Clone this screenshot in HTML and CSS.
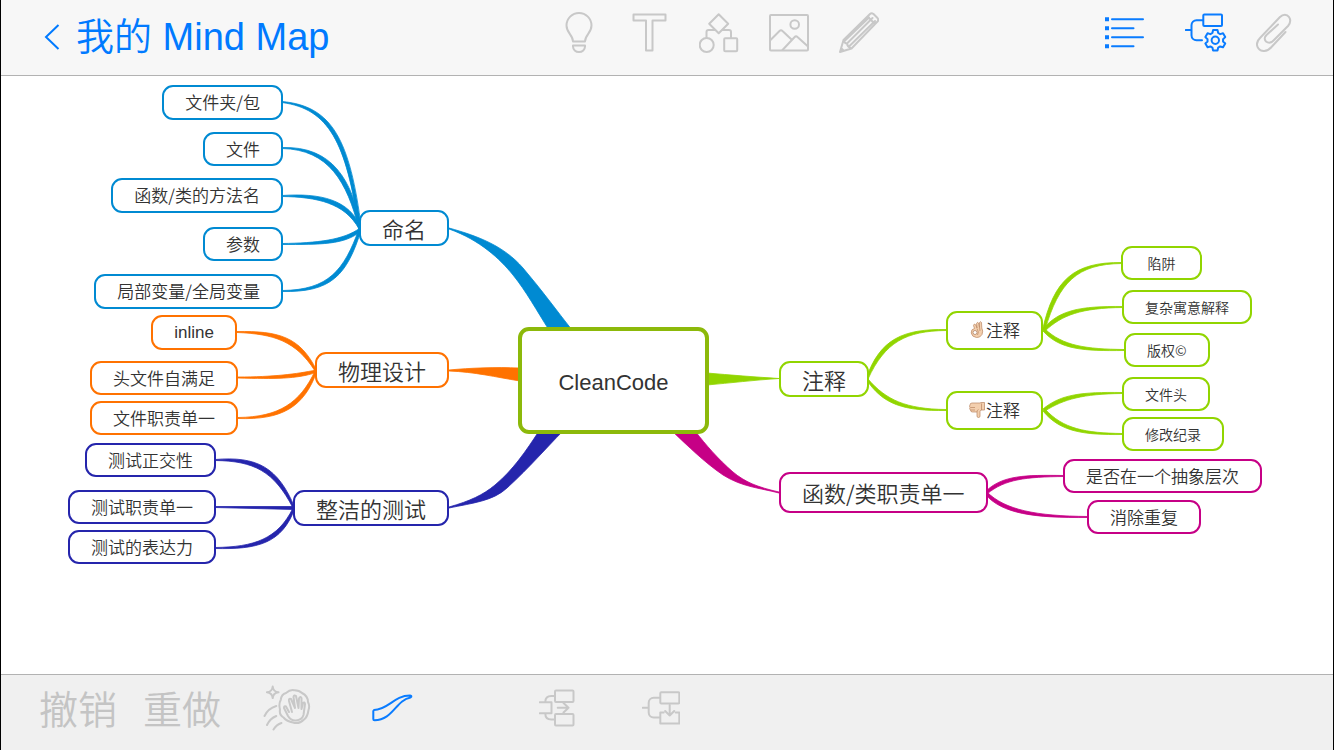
FILE: index.html
```html
<!DOCTYPE html>
<html lang="zh-CN">
<head>
<meta charset="utf-8">
<meta name="viewport" content="width=device-width, initial-scale=1">
<title>我的 Mind Map</title>
<link rel="stylesheet" href="styles.css">
</head>
<body>
<header class="topbar">
  <button class="back" type="button">
    <svg class="back-arrow" width="16" height="28" viewBox="0 0 16 28" aria-hidden="true"><path d="M14.500 2L2 14L14.500 26"/></svg>
    <span>我的 Mind Map</span>
  </button>
  <div class="tools">
    <button class="icon" type="button" aria-label="灵感">
      <svg width="40" height="44" viewBox="0 0 40 44"><path d="M14 30.500C14 24 7.500 22 7.500 14.500a12.500 12.500 0 0 1 25 0C32.500 22 26 24 26 30.500zM14 34.500h12v1a6 5.500 0 0 1-12 0z"/></svg>
    </button>
    <button class="icon" type="button" aria-label="文本">
      <svg width="40" height="44" viewBox="0 0 40 44"><path d="M4.500 3.500h32v6h-13v30h-6.500v-30h-12.500z"/></svg>
    </button>
    <button class="icon" type="button" aria-label="形状">
      <svg width="40" height="44" viewBox="0 0 40 44"><path d="M19.700 3.200l9.500 9.500l-9.500 9.500l-9.500-9.500zM15.500 19h-6a2 2 0 0 0-2 2v6M24 19h6a2 2 0 0 1 2 2v6"/><circle cx="7.700" cy="34" r="7"/><rect x="25.200" y="27.200" width="13" height="13" rx="1"/></svg>
    </button>
    <button class="icon" type="button" aria-label="图片">
      <svg width="40" height="44" viewBox="0 0 40 44"><rect x="1" y="4" width="38" height="35.500" rx="1"/><circle cx="25.700" cy="13.500" r="4.300"/><path d="M1 29.500L10.500 20q1.500-1.500 3 0l9 8.500M13.500 39L25.700 26q1.300-1.500 2.800 0L39 35.500"/></svg>
    </button>
    <button class="icon" type="button" aria-label="画笔">
      <svg width="40" height="44" viewBox="0 0 40 44"><path d="M1 41L4.500 29L31 3q1.500-1.500 3.500 0L38.500 7q1.500 2 0 3.500L12.500 37.500zM4.500 29q1 3.500 3.500 3.500q.5 3.500 4.500 5M8 32.500L33.500 7M6 29.500L30 6.500M10.500 35L36 10M28.500 5.500L36 13M2.500 37.500L4.500 39.500"/></svg>
    </button>
  </div>
  <div class="actions">
    <button class="icon active" type="button" aria-label="大纲">
      <svg width="40" height="44" viewBox="0 0 40 44"><path class="solid" d="M1 6.200h4v4h-4zM1 15.200h4v4h-4zM1 24.200h4v4h-4zM1 33.200h4v4h-4z"/><path d="M8 8.200h31M8 17.200h21.500M8 26.200h31M8 35.200h21.500"/></svg>
    </button>
    <button class="icon active" type="button" aria-label="导图设置">
      <svg width="44" height="44" viewBox="0 0 44 44"><path d="M.7 19H6.500M18 9.200H11.500a5 5 0 0 0-5 5v10a5 5 0 0 0 5 5H17"/><rect x="18.300" y="3.500" width="18.700" height="11.500" rx="1"/><g transform="translate(30.300 29.300)"><path d="M-2.900-7.300L-2.200-10.200H2.200L2.900-7.300L4.870-6.160L7.730-7L9.930-3.190L7.770-1.140V1.140L9.930 3.190L7.730 7L4.870 6.160L2.900 7.300L2.200 10.200H-2.200L-2.900 7.300L-4.870 6.160L-7.730 7L-9.930 3.190L-7.770 1.140V-1.140L-9.930-3.190L-7.730-7L-4.870-6.160z"/><circle r="3.700"/></g></svg>
    </button>
    <button class="icon" type="button" aria-label="附件">
      <svg width="36" height="44" viewBox="0 0 36 44"><path d="M29.500 21L15 36.500C11 41 5 41 2.500 37.500C0 34 1 30 4 27L24 6C27 3 31 3 33 6C35 9 34.500 12 32 15L17.500 29.500C15 32 12 32 10 30.500C8 28.500 8.500 26 10.500 24L22 13.500"/></svg>
    </button>
  </div>
</header>

<main class="canvas">
  <div class="map">
    <svg class="links" width="1332" height="598" viewBox="1 76 1332 598" aria-hidden="true">
      <g class="blue">
        <path d="M449 228C478 236 504 246 523 268C541 289 557 311 572 330H549C537 311 526 291 513 275C500 259 480 240 449 229z"/>
        <path d="M282 101.500C332 106 350 139 361.500 229H359C346 142 329 109 282 102.500z"/>
        <path d="M282 147.500C332 146 352 179 361.500 229H359C347 182 329 149.500 282 148.500z"/>
        <path d="M282 195.500C320 193 350 199 361.500 229H359C345 203 317 197 282 196.500z"/>
        <path d="M282 243.500C317 243 344 240 360 228L361 231C345 245 320 244.500 282 244.500z"/>
        <path d="M282 290.500C329 290 344 270 359 229H361.500C347 276 331 292.500 282 291.500z"/>
      </g>
      <g class="orange">
        <path d="M449 370C470 368 495 367 520 368V381C495 377 475 372 449 371z"/>
        <path d="M237 331.500C278 331 300 336 317 371H315C296 341 274 334 237 332.500z"/>
        <path d="M238 377C273 377 297 374 316 370V372.500C297 379 275 379 238 378z"/>
        <path d="M238 417.500C279 417 300 403 315 371H317C304 408 281 420 238 418.500z"/>
      </g>
      <g class="indigo">
        <path d="M449 507C470 501 483 495 495 485C513 470 526 451 539 431H563C546 448 530 467 507 488C493 501 473 503 449 508z"/>
        <path d="M215 459.500C257 456 278 467 295 508H293C274 471 254 461 215 460.500z"/>
        <path d="M215 506.500L294 506.500V509.500L215 507.500z"/>
        <path d="M215 547.500C254 547 278 539 293 508H295C282 544 257 549.500 215 548.500z"/>
      </g>
      <g class="green">
        <path d="M707 373C730 375 755 377 779 378.500C755 380 730 383 707 385z"/>
        <path d="M866 379C880 338 904 329 946 329.500V330.500C906 331 885 342 868 379z"/>
        <path d="M868 379C886 400 906 409 946 409.500V410.500C904 411 883 405 866 379z"/>
        <path d="M1042.500 330C1054 279 1074 262 1122 262.500V263.500C1077 264 1059 282 1045 330z"/>
        <path d="M1043 329C1059 310 1080 306 1123 306.500V307.500C1081 308 1062 315 1045 331z"/>
        <path d="M1045 329C1063 346 1086 349 1124 349.500V350.500C1084 351 1060 350 1043 331z"/>
        <path d="M1043 409C1061 394 1082 392 1122 392.500V393.500C1083 394 1064 399 1045 411z"/>
        <path d="M1045 409C1063 429 1086 433 1122 433.500V434.500C1084 435 1060 432 1043 411z"/>
      </g>
      <g class="magenta">
        <path d="M672 431C688 446 704 462 723 475C742 487 760 488 779 493V492C757 487 745 482 733 472C718 459 706 445 695 431z"/>
        <path d="M985 492C1002 475 1025 475 1064 475.500V476.500C1026 477 1005 479 987 494z"/>
        <path d="M987 492C1005 510 1036 516 1088 516.500V517.500C1034 518 1002 514 985 494z"/>
      </g>
    </svg>

    <h1 class="node root">CleanCode</h1>

    <div class="node main blue n-naming">命名</div>
    <div class="node sub tall blue n-folder">文件夹/包</div>
    <div class="node sub blue n-file">文件</div>
    <div class="node sub tall blue n-method">函数/类的方法名</div>
    <div class="node sub blue n-param">参数</div>
    <div class="node sub tall blue n-var">局部变量/全局变量</div>

    <div class="node main orange n-physical">物理设计</div>
    <div class="node sub tall latin orange n-inline">inline</div>
    <div class="node sub orange n-header">头文件自满足</div>
    <div class="node sub orange n-single">文件职责单一</div>

    <div class="node main indigo n-test">整洁的测试</div>
    <div class="node sub indigo n-ortho">测试正交性</div>
    <div class="node sub indigo n-duty">测试职责单一</div>
    <div class="node sub indigo n-express">测试的表达力</div>

    <div class="node main green n-comment">注释</div>
    <div class="node sub mid green n-good">
      <svg class="emoji" width="17" height="18" viewBox="0 0 17 18" role="img" aria-label="好"><path class="skin" d="M5.500 7.500Q3.500 3.500 5.500 3Q7 3 8 7L7.500 2.500Q8.500 .5 9.500 2L10.500 6.500L10.500 1.500Q11.500 -.2 12.500 1.500L12.800 7Q14.500 10 13 13.500Q11 17 7.500 16.500Q3 16 2.200 12Q2 8 5.500 7.500z"/><circle class="hole" cx="6" cy="11.500" r="2"/><path class="crease" d="M8.500 14Q10.500 11.500 8 7.500M10.500 6.500L11 10"/></svg>注释
    </div>
    <div class="node sub mid green n-bad">
      <svg class="emoji" width="17" height="18" viewBox="0 0 17 18" role="img" aria-label="差"><path class="skin" d="M1 4Q1 2 3 2H11L12 1.500H15.500V9H12L11 10.500V15Q11 16.500 9.500 16.500T8 15V11H3.500Q1.500 11 1.500 9Q0 8 1 6.500Q0 5 1 4z"/><path class="crease" d="M1.500 6.500H6M1.500 9H6M8 11Q8 9 9.500 8.500M12.500 2.500V9"/></svg>注释
    </div>
    <div class="node leaf green n-trap">陷阱</div>
    <div class="node leaf green n-complex">复杂寓意解释</div>
    <div class="node leaf green n-copyright">版权©</div>
    <div class="node leaf green n-filehead">文件头</div>
    <div class="node leaf green n-history">修改纪录</div>

    <div class="node main big magenta n-function">函数/类职责单一</div>
    <div class="node sub magenta n-abstract">是否在一个抽象层次</div>
    <div class="node sub magenta n-repeat">消除重复</div>
  </div>
</main>

<footer class="bottombar">
  <div class="history">
    <button class="text" type="button">撤销</button>
    <button class="text" type="button">重做</button>
  </div>
  <button class="icon clean" type="button" aria-label="清理">
    <svg width="48" height="48" viewBox="0 0 48 48"><path d="M9.700 2.500Q10.200 7.800 15.500 8.300Q10.200 8.800 9.700 14.100Q9.200 8.800 3.900 8.300Q9.200 7.800 9.700 2.500zM1.500 32Q5 24.500 13.300 22M4 41Q7 34.500 13.300 32M10.500 45.500Q13.500 40.500 18.500 39M17.700 16Q18.500 10 23 9Q27 5.500 31 6.200Q36 6 39 9Q45 12 45 18Q47 22 45.500 26Q44.500 33 41 35.500Q36 40.500 30 38.500Q24 37.500 20.500 33.500Q16 31 17 25.500Q15.500 20 17.700 16z"/><path d="M26 28L23 22.500Q21 21.500 21 24L25 32Q28 37 33 36.500Q39 36 40.500 31L42 20Q41.500 17.500 40 19L38.500 25L38.500 14Q37 12 36 14.500L35.500 24L33 12Q31 10.500 30.500 13L32 24L28 15Q25.500 14 26 17L29 28"/></svg>
  </button>
  <button class="icon active brush" type="button" aria-label="线条样式">
    <svg width="42" height="48" viewBox="0 0 42 48"><path d="M3 26C17 26 23 11.500 39 11.500Q41.500 12 39.500 13.500C25 16 22 36 3.500 36.300Q2.300 36.300 2.300 35V27z"/></svg>
  </button>
  <div class="insert">
    <button class="icon" type="button" aria-label="插入子主题">
      <svg width="38" height="48" viewBox="0 0 38 48"><rect x="16" y="6.500" width="18.500" height="11.500" rx="1"/><rect x="16" y="30" width="18.500" height="11.500" rx="1"/><path d="M.8 18.300H12.500V29.200H.8M6.300 18q0-6 6-6H16M6.300 29.500q0 6 6 6H16M18.700 23.700H29.500M24.500 19L29.500 23.700L24.500 28.500"/></svg>
    </button>
    <button class="icon" type="button" aria-label="插入同级主题">
      <svg width="38" height="48" viewBox="0 0 38 48"><rect x="18.300" y="8.300" width="19" height="11.200" rx="1"/><path d="M.7 23.700H6.700M18 13.700H11.700a5 5 0 0 0-5 5v9.800a5 5 0 0 0 5 5H18M21.700 28.500H18.300v11H37.300v-11H33.700M27.700 21V31.500M23.200 27L27.700 31.500L32.200 27"/></svg>
    </button>
  </div>
</footer>
</body>
</html>
```
FILE: styles.css
```css
* {
  box-sizing: border-box;
}

body {
  margin: 0;
  min-height: 100vh;
  display: flex;
  flex-direction: column;
  border: solid #000;
  border-width: 0 1px;
  background: #fff;
  color: #333;
  font-family: "Liberation Sans", "Noto Sans CJK SC", sans-serif;
}

button {
  margin: 0;
  padding: 0;
  border: 0;
  background: none;
  color: inherit;
  font: inherit;
  cursor: pointer;
}

svg {
  display: block;
}

/* Bars */

.topbar {
  display: flex;
  align-items: center;
  justify-content: space-between;
  height: 76px;
  padding: 0 41px 9px 43px;
  border-bottom: 1px solid #b2b2b2;
  background: #f7f7f7;
}

.back {
  display: flex;
  align-items: center;
  gap: 16px;
  padding: 8px 4px 0 0;
  color: #007aff;
  font-size: 38px;
  font-weight: 350;
  line-height: 48px;
  white-space: nowrap;
}

.back-arrow {
  fill: none;
  stroke: currentColor;
  stroke-width: 2;
}

.tools {
  display: flex;
  gap: 30px;
}

.actions {
  display: flex;
  gap: 34px;
}

.actions .icon:nth-child(2) {
  margin: 0 -7px 0 7px;
}

.icon {
  color: #c8c8c8;
}

.icon svg {
  fill: none;
  stroke: currentColor;
  stroke-width: 2;
  stroke-linejoin: round;
  stroke-linecap: round;
}

.icon .solid {
  fill: currentColor;
  stroke: none;
}

.icon.active {
  color: #0a7cff;
}

.bottombar {
  display: flex;
  align-items: center;
  height: 76px;
  padding: 0 38px 9px;
  border-top: 1px solid #b2b2b2;
  background: #f0f0f0;
}

.history {
  display: flex;
  gap: 26px;
  padding-top: 6px;
}

.text {
  color: #c4c4c4;
  font-size: 39px;
  font-weight: 350;
  line-height: 48px;
}

.clean {
  margin-left: 42px;
}

.brush {
  margin-left: 60px;
}

.insert {
  display: flex;
  gap: 65px;
  margin-left: 126px;
}

/* Map */

.canvas {
  flex: 1;
  display: flex;
  align-items: center;
  justify-content: center;
  overflow: hidden;
}

.map {
  position: relative;
  flex: none;
  width: 1332px;
  height: 598px;
}

.links {
  position: absolute;
  inset: 0;
}

.links g {
  fill: currentColor;
  stroke: currentColor;
  stroke-width: 0.8;
}

.blue { color: #008ad2; }
.orange { color: #ff7200; }
.indigo { color: #2525ac; }
.green { color: #91d500; }
.magenta { color: #c60086; }

.node {
  position: absolute;
  display: flex;
  align-items: center;
  justify-content: center;
  margin: 0;
  border: 2px solid currentColor;
  border-radius: 11px;
  background: #fff;
  -webkit-text-fill-color: #333;
  font-family: "Noto Sans CJK SC", sans-serif;
  font-weight: 350;
  line-height: 24px;
  white-space: nowrap;
}

.root {
  left: 517px;
  top: 251px;
  width: 191px;
  height: 107px;
  padding-top: 4px;
  border: 4px solid #8cb90a;
  border-radius: 11px;
  font-family: "Liberation Sans", sans-serif;
  font-size: 22px;
}

.main {
  height: 36px;
  padding: 0 21px 1px;
  font-size: 22px;
}

.big {
  height: 41px;
}

.sub {
  height: 34px;
  padding: 0 21px 1px;
  font-size: 17px;
}

.tall {
  height: 35px;
}

.mid {
  height: 39px;
}

.latin {
  padding-bottom: 0;
  font-family: "Liberation Sans", sans-serif;
}

.leaf {
  height: 34px;
  min-width: 81px;
  padding: 0 21px 1px;
  font-size: 14px;
}

.emoji .skin {
  fill: #f3cfae;
  stroke: #b98562;
  stroke-width: 0.7;
}

.emoji .hole {
  fill: #fff;
  stroke: #a8785a;
  stroke-width: 0.7;
}

.emoji .crease {
  fill: none;
  stroke: #b98562;
  stroke-width: 0.7;
}

.n-naming { right: 884px; top: 134px; }
.n-folder { right: 1050px; top: 9px; }
.n-file { right: 1050px; top: 56px; }
.n-method { right: 1050px; top: 102px; }
.n-param { right: 1050px; top: 151px; }
.n-var { right: 1050px; top: 198px; }

.n-physical { right: 884px; top: 276px; }
.n-inline { right: 1096px; top: 239px; }
.n-header { right: 1095px; top: 285px; }
.n-single { right: 1095px; top: 325px; }

.n-test { right: 884px; top: 414px; }
.n-ortho { right: 1117px; top: 367px; }
.n-duty { right: 1117px; top: 414px; }
.n-express { right: 1117px; top: 454px; }

.n-comment { left: 778px; top: 285px; }
.n-good { left: 945px; top: 235px; }
.n-bad { left: 945px; top: 315px; }
.n-trap { left: 1120px; top: 170px; }
.n-complex { left: 1121px; top: 214px; }
.n-copyright { left: 1123px; top: 257px; }
.n-filehead { left: 1121px; top: 301px; }
.n-history { left: 1121px; top: 341px; }

.n-function { left: 778px; top: 396px; }
.n-abstract { left: 1062px; top: 383px; }
.n-repeat { left: 1086px; top: 424px; }
```
